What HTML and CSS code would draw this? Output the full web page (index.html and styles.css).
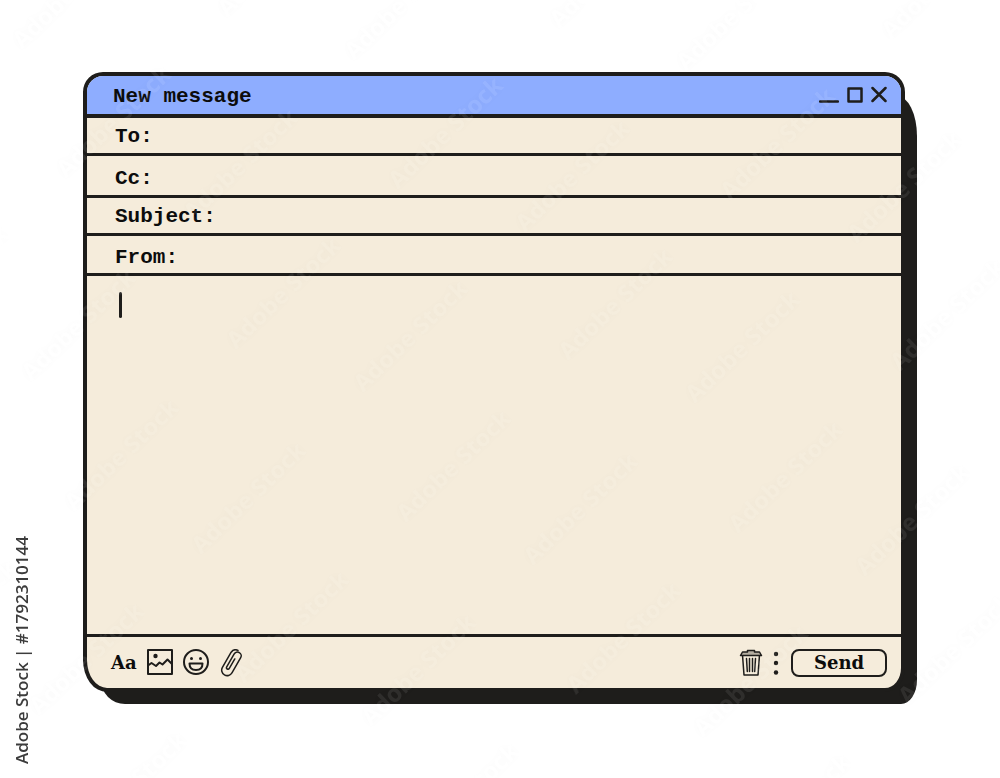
FILE: index.html
```html
<!DOCTYPE html>
<html lang="en">

<head>
    <meta charset="UTF-8">
    <meta name="viewport" content="width=device-width, initial-scale=1.0">
    <title>New message</title>
    <link rel="stylesheet" href="styles.css">
</head>

<body>
    <form class="window" onsubmit="return false">
        <div class="titlebar">
            <h1 class="title">New message</h1>
            <div class="controls">
                <button type="button" class="control" aria-label="Minimize">
                    <svg width="20" height="20" viewBox="0 0 20 20"><path d="M1 16.500h18" /></svg>
                </button>
                <button type="button" class="control" aria-label="Maximize">
                    <svg width="16" height="20" viewBox="0 0 16 20"><path d="M1.500 3.500h13v13h-13z" /></svg>
                </button>
                <button type="button" class="control" aria-label="Close">
                    <svg width="16" height="20" viewBox="0 0 16 20"><path d="M1.500 3l13 13M14.500 3l-13 13" /></svg>
                </button>
            </div>
        </div>
        <div class="field">
            <label for="to">To:</label>
            <input id="to" type="text">
        </div>
        <div class="field field-cc">
            <label for="cc">Cc:</label>
            <input id="cc" type="text">
        </div>
        <div class="field">
            <label for="subject">Subject:</label>
            <input id="subject" type="text">
        </div>
        <div class="field field-from">
            <label for="from">From:</label>
            <input id="from" type="text">
        </div>
        <div class="message">
            <textarea aria-label="Message"></textarea>
            <span class="caret"></span>
        </div>
        <div class="toolbar">
            <div class="tools">
                <button type="button" class="format">Aa</button>
                <button type="button" aria-label="Insert image">
                    <svg width="26" height="28" viewBox="0 0 26 28">
                        <path d="M1 1h24v24H1zM1 16.500l3.500-2.500 4.500 3 3.500-3.500 3 2 5-5 4.500 4.500" />
                        <circle class="solid" cx="8.500" cy="7" r="2.200" />
                    </svg>
                </button>
                <button type="button" aria-label="Insert emoji">
                    <svg width="26" height="28" viewBox="0 0 26 28">
                        <circle cx="13" cy="13" r="12" />
                        <path d="M6.500 14.500h13c0 4-2.500 6.500-6.500 6.500S6.500 18.500 6.500 14.500z" />
                        <circle class="solid" cx="8.500" cy="9.500" r="1.500" />
                        <circle class="solid" cx="17.500" cy="9.500" r="1.500" />
                    </svg>
                </button>
                <button type="button" aria-label="Attach file">
                    <svg width="24" height="28" viewBox="0 0 24 28">
                        <path class="clip" transform="translate(12 13.500) rotate(30)" d="M1.500-5V6a1.500 1.500 0 0 1-3 0V-9a3.750 3.750 0 0 1 7.500 0V8.500a5.500 5.500 0 0 1-11 0V-9a5.500 5.500 0 0 1 5-5" />
                    </svg>
                </button>
            </div>
            <div class="actions">
                <button type="button" class="trash" aria-label="Delete">
                    <svg width="24" height="28" viewBox="0 0 24 28">
                        <path d="M3.500 6l1.500 20h14l1.500-20M7.500 9.500l.8 13M10.500 9.500v13M13.500 9.500v13M16.500 9.500l-.8 13" />
                        <path class="lid" d="M8.500 3V1.500h7V3h5l2 3.500h-21L3.500 3z" />
                    </svg>
                </button>
                <button type="button" aria-label="More options">
                    <svg width="6" height="28" viewBox="0 0 6 28">
                        <circle class="solid" cx="3" cy="5" r="2.200" />
                        <circle class="solid" cx="3" cy="14" r="2.200" />
                        <circle class="solid" cx="3" cy="23.500" r="2.200" />
                    </svg>
                </button>
                <button type="submit" class="send">Send</button>
            </div>
        </div>
    </form>

    <svg class="watermark" aria-hidden="true">
        <defs>
            <text id="mark" transform="rotate(-44)">Adobe Stock</text>
            <g id="pair">
                <use href="#mark" />
                <use href="#mark" x="127" y="43" />
            </g>
            <g id="band">
                <use href="#pair" x="-664" y="-22" />
                <use href="#pair" x="-332" y="-11" />
                <use href="#pair" />
                <use href="#pair" x="332" y="11" />
                <use href="#pair" x="664" y="22" />
                <use href="#pair" x="996" y="33" />
            </g>
        </defs>
        <use href="#band" x="-105" y="7" />
        <use href="#band" x="66" y="179" />
        <use href="#band" x="236" y="350" />
        <use href="#band" x="406" y="523" />
        <use href="#band" x="576" y="695" />
        <use href="#band" x="414" y="856" />
    </svg>
    <p class="stock-id">Adobe Stock | #1792310144</p>
</body>

</html>
```

FILE: styles.css
```css
* {
    box-sizing: border-box;
}

body {
    margin: 0;
    min-height: 100vh;
    padding: 72px 95px 86px 83px;
    display: flex;
    position: relative;
    overflow: hidden;
    background-color: white;
    color: #0c0c0c;
    font-family: "Courier New", "Liberation Mono", monospace;
    font-size: 21px;
    font-weight: bold;
}

.window {
    flex: 1;
    display: flex;
    flex-direction: column;
    position: relative;
    background-color: #f5ecdb;
    border: 4px solid #1e1d1b;
    border-radius: 20px 20px 20px 24px / 20px 20px 24px 32px;
}

/* thick shadow behind the window */
.window::before {
    content: "";
    position: absolute;
    z-index: -1;
    top: 20px;
    right: -16px;
    bottom: -16px;
    left: 14px;
    background-color: #1e1d1b;
    border-radius: 20px 20px 16px 24px / 20px 40px 24px 24px;
}

.titlebar {
    display: flex;
    align-items: center;
    justify-content: space-between;
    height: 42px;
    padding: 0 14px 0 26px;
    background-color: #8eadff;
    border-bottom: 4px solid #1e1d1b;
    border-radius: 16px 16px 0 0;
}

.title {
    margin: 0;
    padding-top: 2px;
    font-size: 21px;
}

.controls {
    display: flex;
    gap: 8px;
}

button {
    padding: 0;
    border: none;
    background: none;
    color: #0c0c0c;
    cursor: pointer;
}

svg {
    display: block;
    fill: none;
    stroke: #1e1d1b;
    stroke-width: 2;
    stroke-linecap: round;
    stroke-linejoin: round;
}

.control svg {
    stroke-width: 2.5;
}

.field {
    display: flex;
    align-items: center;
    height: 38px;
    padding: 2px 28px 0;
    border-bottom: 3px solid #1e1d1b;
}

.field-cc {
    height: 42px;
    padding-top: 6px;
}

.field-from {
    height: 40px;
    padding-top: 6px;
}

.field input {
    flex: 1;
    min-width: 0;
    height: 28px;
    border: none;
    outline: none;
    background: none;
    font: inherit;
}

.message {
    flex: 1;
    display: flex;
    position: relative;
}

.message textarea {
    flex: 1;
    padding: 16px 32px;
    border: none;
    outline: none;
    resize: none;
    background: none;
    font: inherit;
}

.caret {
    position: absolute;
    top: 16px;
    left: 32px;
    width: 3px;
    height: 26px;
    border-radius: 2px;
    background-color: #1e1d1b;
}

.toolbar {
    display: flex;
    align-items: center;
    justify-content: space-between;
    height: 54px;
    padding: 0 14px 0 24px;
    border-top: 3px solid #1e1d1b;
}

.tools,
.actions {
    display: flex;
    align-items: center;
    gap: 10px;
}

.format,
.send {
    font-family: "DejaVu Serif", serif;
    font-size: 18px;
    font-weight: bold;
}

.solid {
    fill: #1e1d1b;
    stroke: none;
}

.clip {
    stroke-width: 1.5;
}

.trash svg {
    stroke-width: 1.5;
}

.lid {
    fill: #b5aea1;
}

.send {
    width: 96px;
    height: 28px;
    margin-left: 2px;
    border: 2px solid #1e1d1b;
    border-radius: 8px;
}

.watermark {
    position: absolute;
    top: 0;
    left: 0;
    width: 100%;
    height: 100%;
    pointer-events: none;
    fill: white;
    stroke: none;
    opacity: 0.08;
    font-family: "Open Sans", sans-serif;
    font-size: 24px;
    font-weight: 700;
    filter: drop-shadow(0 0 4px rgba(0, 0, 0, 0.3));
}

.stock-id {
    position: absolute;
    left: 10px;
    bottom: 14px;
    margin: 0;
    writing-mode: vertical-rl;
    transform: rotate(180deg);
    color: #3c3c3c;
    font-family: "Open Sans", sans-serif;
    font-size: 17px;
    font-weight: 600;
    line-height: 24px;
}
```
